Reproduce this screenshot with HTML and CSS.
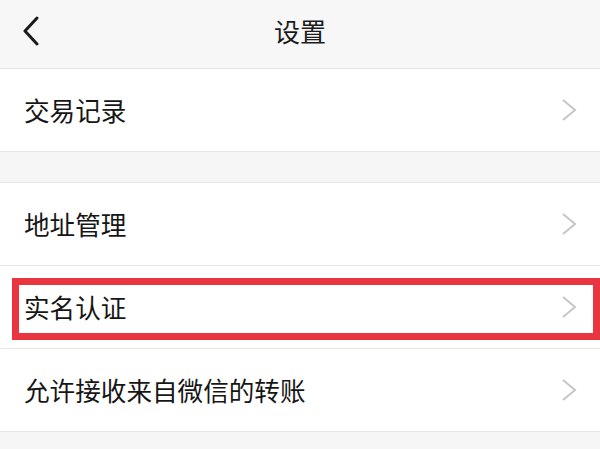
FILE: index.html
```html
<!DOCTYPE html>
<html lang="zh-CN">
<head>
<meta charset="utf-8">
<title>设置</title>
<link rel="stylesheet" href="styles.css">
</head>
<body>
<header class="topbar">
  <span class="back">
    <svg width="18" height="30" viewBox="0 0 18 30"><path d="M15 2 L3 15 L15 28" fill="none" stroke="#1c1c1c" stroke-width="3" stroke-linecap="round" stroke-linejoin="round"/></svg>
  </span>
  <h1 class="title">设置</h1>
  <span class="spacer"></span>
</header>
<section class="group">
  <div class="row"><span class="label">交易记录</span><svg class="arrow" width="16" height="22" viewBox="0 0 16 22"><path d="M2 1 L14 11 L2 21" fill="none" stroke="#c6c6c6" stroke-width="2"/></svg></div>
</section>
<section class="group">
  <div class="row"><span class="label">地址管理</span><svg class="arrow" width="16" height="22" viewBox="0 0 16 22"><path d="M2 1 L14 11 L2 21" fill="none" stroke="#c6c6c6" stroke-width="2"/></svg></div>
  <div class="row"><span class="label">实名认证</span><svg class="arrow" width="16" height="22" viewBox="0 0 16 22"><path d="M2 1 L14 11 L2 21" fill="none" stroke="#c6c6c6" stroke-width="2"/></svg><span class="highlight"></span></div>
  <div class="row"><span class="label">允许接收来自微信的转账</span><svg class="arrow" width="16" height="22" viewBox="0 0 16 22"><path d="M2 1 L14 11 L2 21" fill="none" stroke="#c6c6c6" stroke-width="2"/></svg></div>
</section>
</body>
</html>
```
FILE: styles.css
```css
html, body {
  margin: 0;
  padding: 0;
  background: #f6f6f6;
  font-family: "Noto Sans CJK SC", "Noto Sans", sans-serif;
  color: #1a1a1a;
  overflow: hidden;
}
.topbar {
  height: 62px;
  padding-bottom: 6px;
  display: flex;
  align-items: center;
  justify-content: space-between;
  background: #f7f7f7;
  border-bottom: 1px solid #e6e6e6;
  padding-left: 22px;
  padding-right: 22px;
}
.back { display: flex; width: 40px; }
.spacer { width: 40px; }
.title {
  margin: 0;
  font-size: 26px;
  font-weight: 400;
  line-height: 1;
  color: #1c1c1c;
}
.group {
  background: #fff;
  border-bottom: 1px solid #e6e6e6;
}
.group + .group {
  margin-top: 30px;
  border-top: 1px solid #e6e6e6;
}
.row {
  position: relative;
  height: 82px;
  display: flex;
  align-items: center;
  justify-content: space-between;
  padding: 0 23px 0 24px;
}
.row + .row { border-top: 1px solid #e6e6e6; }
.label {
  font-size: 25.6px;
  line-height: 1;
  color: #161616;
}
.arrow { display: block; }
.highlight {
  position: absolute;
  left: 12px;
  right: 0;
  top: 12px;
  height: 62px;
  box-sizing: border-box;
  border: 7px solid #e8353f;
}
```
